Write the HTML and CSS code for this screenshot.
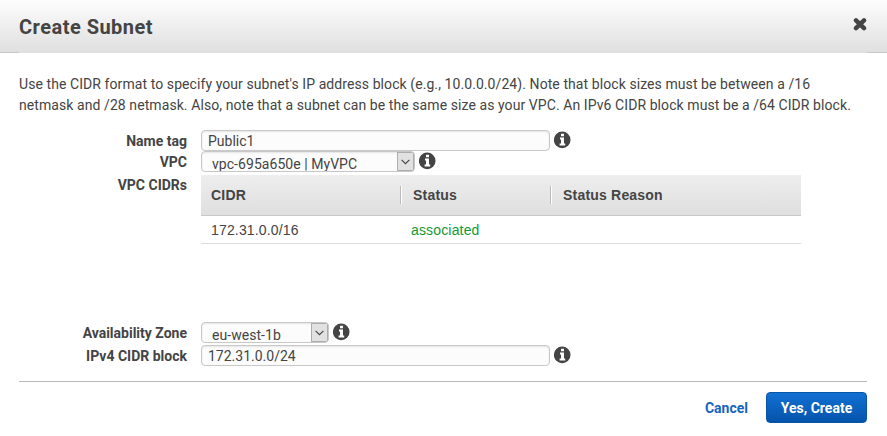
FILE: index.html
```html
<!DOCTYPE html>
<html lang="en">
<head>
<meta charset="utf-8">
<title>Create Subnet</title>
<link rel="stylesheet" href="styles.css">
</head>
<body>
<svg class="defs" width="0" height="0" aria-hidden="true">
  <symbol id="info" viewBox="0 0 17 18">
    <circle cx="8.2" cy="8.9" r="8.3" fill="#444"/>
    <path d="M7 2.8h3v2.4H7zM6 6.5h4v5.9h1.2v2H5.6v-2H7V8.5H6z" fill="#fff"/>
  </symbol>
  <symbol id="chevron" viewBox="0 0 9 6">
    <path d="M.6 .8L4.5 4.7L8.4 .8" fill="none" stroke="#444" stroke-width="1.1"/>
  </symbol>
</svg>
<div class="dialog">
  <header class="header">
    <h1 class="title">Create Subnet</h1>
    <svg class="close" viewBox="0 0 14 14"><path d="M3 3.4L11 11.2M11 3.4L3 11.2" stroke="#444" stroke-width="4.4" stroke-linecap="round"/></svg>
  </header>
  <div class="intro">
    <div>Use the CIDR format to specify your subnet's IP address block (e.g., 10.0.0.0/24). Note that block sizes must be between a /16</div>
    <div>netmask and /28 netmask. Also, note that a subnet can be the same size as your VPC. An IPv6 CIDR block must be a /64 CIDR block.</div>
  </div>
  <div class="form">
    <div class="row">
      <div class="label">Name tag</div>
      <div class="field">Public1</div>
      <svg class="info"><use href="#info"/></svg>
    </div>
    <div class="row">
      <div class="label">VPC</div>
      <div class="select select-vpc"><div class="value">vpc-695a650e | MyVPC</div><div class="arrow"><svg><use href="#chevron"/></svg></div></div>
      <svg class="info"><use href="#info"/></svg>
    </div>
    <div class="row row-cidrs">
      <div class="label">VPC CIDRs</div>
      <div class="table">
        <div class="thead"><div class="th">CIDR</div><div class="th">Status</div><div class="th">Status Reason</div></div>
        <div class="tr"><div class="td">172.31.0.0/16</div><div class="td ok">associated</div><div class="td"></div></div>
      </div>
    </div>
    <div class="row row-az">
      <div class="label">Availability Zone</div>
      <div class="select select-az"><div class="value">eu-west-1b</div><div class="arrow"><svg><use href="#chevron"/></svg></div></div>
      <svg class="info"><use href="#info"/></svg>
    </div>
    <div class="row">
      <div class="label">IPv4 CIDR block</div>
      <div class="field">172.31.0.0/24</div>
      <svg class="info"><use href="#info"/></svg>
    </div>
  </div>
  <footer class="footer">
    <span class="cancel">Cancel</span>
    <button class="create" type="button">Yes, Create</button>
  </footer>
</div>
</body>
</html>
```
FILE: styles.css
```css
* { box-sizing: border-box; }
body { margin: 0; background: #fff; color: #444; font: 14px/21px Roboto, sans-serif; overflow: hidden; }
.defs { display: block; }
.dialog { height: 436px; white-space: nowrap; }
.header { height: 53px; padding: 0 19px; display: flex; justify-content: space-between; background: linear-gradient(#fdfdfd, #dfdfdf); position: relative; }
.title { margin: 13px 0 0; font-size: 20px; line-height: 28px; font-weight: 700; letter-spacing: .48px; }
.close { width: 14px; height: 14px; margin: 17px 1px 0 0; }
.header::before, .header::after { content: ""; position: absolute; bottom: 0; width: 19px; height: 1px; background: #c8c8c8; }
.header::before { left: 0; }
.header::after { right: 0; width: 20px; }
.intro { height: 77px; padding: 21px 19px 0; letter-spacing: .078px; }
.form { height: 251px; }
.row { display: flex; height: 21px; }
.label { width: 187px; margin-right: 14px; padding-top: 1px; text-align: right; font-weight: 700; flex: none; }
.field, .select { height: 21px; border: 1px solid #c8c8c8; border-radius: 4px; background: #fcfcfc; box-shadow: inset 0 1px 2px #e4e4e4; overflow: hidden; flex: none; }
.field { width: 349px; padding-left: 6px; line-height: 20px; }
.select { display: flex; }
.select-vpc { width: 214px; }
.select-az { width: 128px; }
.value { flex: 1; padding: 3px 0 0 10px; height: 19px; overflow: hidden; line-height: 18px; letter-spacing: .05px; }
.arrow { width: 17px; height: 19px; border: 1px solid #adadad; background: #e1e1e1; display: flex; align-items: center; justify-content: center; }
.arrow svg { width: 9px; height: 6px; }
.info { width: 17px; height: 18px; margin: 1px 0 0 4px; flex: none; }
.row-cidrs { height: 150px; padding-top: 3px; }
.row-cidrs .label { padding-top: 0; }
.row-az { height: 23px; }
.table { width: 600px; font-family: "Liberation Sans", Arial, sans-serif; }
.thead, .tr { display: grid; grid-template-columns: 199px 150px 251px; }
.thead { height: 41px; align-items: center; background: linear-gradient(#eee, #dfdfdf); border-bottom: 1px solid #c8c8c8; font-weight: 700; }
.th { height: 18px; line-height: 18px; padding-left: 10px; letter-spacing: .2px; }
.th + .th { border-left: 1px solid #bbb; padding-left: 12px; box-shadow: inset 1px 0 #fff; }
.tr { height: 28px; border-bottom: 1px solid #ddd; line-height: 28px; }
.td { padding-left: 10px; letter-spacing: .16px; }
.td + .td { padding-left: 11px; }
.ok { color: #109a33; }
.footer { height: 55px; margin: 0 20px 0 19px; border-top: 1px solid #b8b8b8; display: flex; justify-content: flex-end; padding-top: 10px; font-weight: 700; }
.cancel { color: #1765c1; line-height: 32px; margin-right: 18px; }
.create { width: 101px; height: 31px; padding: 1px 0 0; border: 1px solid #0855a8; border-radius: 4px; background: linear-gradient(#1270d2, #0553ab); color: #fff; font: 700 14px/28px Roboto, sans-serif; }
```
